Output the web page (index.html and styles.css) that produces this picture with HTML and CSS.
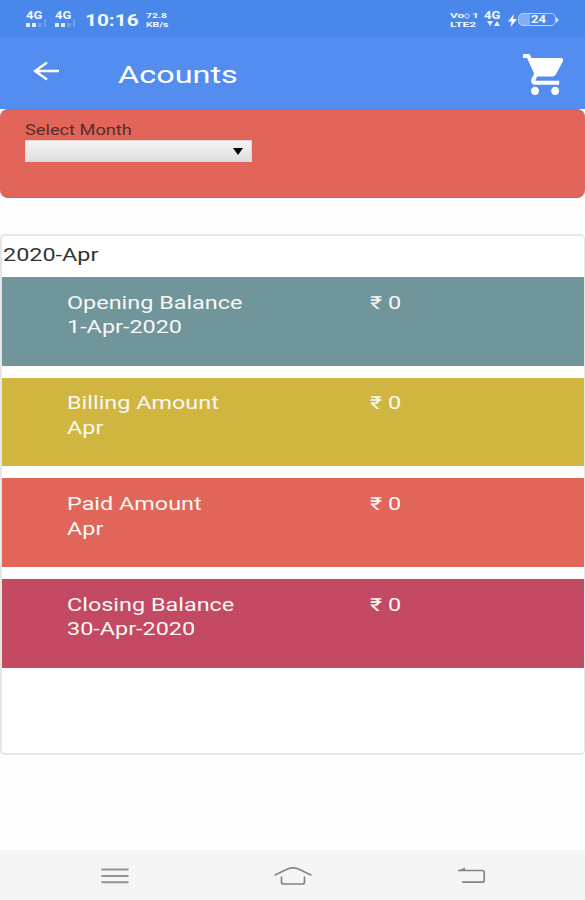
FILE: index.html
```html
<!DOCTYPE html>
<html lang="en">

<head>
    <meta charset="UTF-8">
    <meta name="viewport" content="width=device-width, initial-scale=1.0">
    <title>Acounts</title>
    <link rel="stylesheet" href="styles.css">
</head>

<body>
    <!-- status bar -->
    <div class="status-bar">
        <div class="signal">
            <span class="wide">4G</span>
            <div class="bars"><i></i><i></i><i class="off"></i><i class="off tall"></i></div>
        </div>
        <div class="signal">
            <span class="wide">4G</span>
            <div class="bars"><i></i><i></i><i class="off"></i><i class="off tall"></i></div>
        </div>
        <div class="clock"><span class="wide">10:16</span></div>
        <div class="speed"><span class="wide">72.8</span><span class="wide">KB/s</span></div>
        <div class="volte">
            <div class="vo"><span class="wide">Vo</span><svg width="6" height="6" viewBox="0 0 6 6" fill="none" stroke="#cfe1ff"><circle cx="3" cy="3" r="2.2"/></svg><span class="wide">1</span></div>
            <span class="wide">LTE2</span>
        </div>
        <div class="data">
            <span class="wide">4G</span>
            <svg width="13" height="5" viewBox="0 0 13 5"><path d="M0 0h6L3 5zM7 5h6L10 0z" fill="#e8f1ff"/></svg>
        </div>
        <svg class="bolt" width="9" height="13" viewBox="0 0 9 13"><path d="M6 0L0 7.5h3.6L2.6 13L9 5H5z" fill="#fff"/></svg>
        <div class="battery"><span class="wide">24</span></div>
        <svg class="battery-tip" width="3" height="6" viewBox="0 0 3 6"><path d="M0 0l3 3-3 3z" fill="#c5dcff"/></svg>
    </div>

    <header class="toolbar">
        <svg class="back" width="27" height="20" viewBox="0 0 27 20" fill="none" stroke="#fff" stroke-width="2.4">
            <path d="M2 10H26M14 1.5L2 10L14 18.5"/>
        </svg>
        <h1><span class="wide">Acounts</span></h1>
        <svg class="cart" width="42" height="41" viewBox="1 2 20.9 20" preserveAspectRatio="none" fill="#fff">
            <path d="M7 18c-1.1 0-1.99.9-1.99 2S5.9 22 7 22s2-.9 2-2-.9-2-2-2zM1 2v2h2l3.6 7.59-1.35 2.45c-.16.28-.25.61-.25.96 0 1.1.9 2 2 2h12v-2H7.42c-.14 0-.25-.11-.25-.25l.03-.12.9-1.63h7.45c.75 0 1.41-.41 1.75-1.03l3.58-6.49c.08-.14.12-.31.12-.48 0-.55-.45-1-1-1H5.21l-.94-2H1zm16 16c-1.1 0-1.99.9-1.99 2s.89 2 1.99 2 2-.9 2-2-.9-2-2-2z"/>
        </svg>
    </header>

    <section class="filter">
        <label class="wide">Select Month</label>
        <div class="select">
            <svg width="10" height="7" viewBox="0 0 10 7"><path d="M0 0h10L5 7z" fill="#050505"/></svg>
        </div>
    </section>

    <section class="panel">
        <div class="month"><span class="wide">2020-Apr</span></div>
        <div class="row opening">
            <div class="name"><span class="wide">Opening Balance</span><span class="wide">1-Apr-2020</span></div>
            <div class="amount"><span class="wide">₹ 0</span></div>
        </div>
        <div class="row billing">
            <div class="name"><span class="wide">Billing Amount</span><span class="wide">Apr</span></div>
            <div class="amount"><span class="wide">₹ 0</span></div>
        </div>
        <div class="row paid">
            <div class="name"><span class="wide">Paid Amount</span><span class="wide">Apr</span></div>
            <div class="amount"><span class="wide">₹ 0</span></div>
        </div>
        <div class="row closing">
            <div class="name"><span class="wide">Closing Balance</span><span class="wide">30-Apr-2020</span></div>
            <div class="amount"><span class="wide">₹ 0</span></div>
        </div>
    </section>

    <nav class="nav-bar">
        <svg width="28" height="18" viewBox="0 0 28 18" fill="none" stroke="#949494" stroke-width="2">
            <path d="M.5 2.5h27M.5 9h27M.5 15.2h27"/>
        </svg>
        <svg width="38" height="20" viewBox="0 0 38 20" fill="none" stroke="#858585" stroke-width="1.7">
            <path d="M.5 9.3L13.5 3Q19 .8 24.5 3L37.5 9.3M7.5 10.5v5.5q0 2 2 2h19q2 0 2-2v-5.5"/>
        </svg>
        <svg width="29" height="18" viewBox="0 0 29 18" fill="none" stroke="#858585" stroke-width="1.7">
            <path d="M1 3.5H25q2.200 0 2.200 2v7.700q0 2-2.200 2H5"/>
            <path d="M1 3.800L8 .5V3.800z" fill="#858585" stroke="none"/>
        </svg>
    </nav>
</body>

</html>
```

FILE: styles.css
```css
* {
    margin: 0;
    padding: 0;
    box-sizing: border-box;
}

body {
    font-family: Roboto, 'Liberation Sans', sans-serif;
    width: 585px;
    height: 900px;
    display: flex;
    flex-direction: column;
    background-color: #fefefe;
    overflow: hidden;
}

svg {
    display: block;
    flex-shrink: 0;
}

/* wide letterforms, stretched from the left edge */
.wide {
    display: block;
    width: max-content;
    white-space: nowrap;
    transform: scaleX(1.3);
    transform-origin: left;
}

.status-bar {
    height: 38px;
    flex-shrink: 0;
    display: flex;
    align-items: flex-start;
    padding: 11px 0 0 26px;
    background-color: #4a87ea;
    color: #f3f8ff;
    font-weight: 700;
}

.signal {
    width: 29px;
    font-size: 10px;
    line-height: 10px;
}

.bars {
    display: flex;
    align-items: flex-end;
    gap: 2px;
    height: 6px;
}

.bars i {
    width: 4px;
    height: 4px;
    background-color: #e0edff;
}

.bars .off {
    background-color: #6b9df1;
}

.bars .tall {
    width: 2px;
    height: 8px;
}

.clock {
    width: 62px;
    padding-left: 1px;
    font-size: 16px;
    line-height: 19px;
}

.speed {
    width: 304px;
    font-size: 8px;
    line-height: 9px;
}

.speed .wide {
    transform: scaleX(1.3);
}

.volte {
    width: 34px;
    font-size: 8px;
    line-height: 9px;
}

.vo {
    display: flex;
    align-items: center;
    width: 27px;
}

.vo svg {
    margin: 0 2px 0 4px;
}

.volte .wide {
    transform: scaleX(1.5);
}

.data {
    width: 24px;
    font-size: 10px;
    line-height: 10px;
}

.data svg {
    margin-left: 3px;
}

.bolt {
    margin: 3px 1px 0 0;
}

.battery {
    width: 38px;
    height: 13px;
    margin-top: 2px;
    padding-left: 12px;
    border: 1px solid #b8d3ff;
    border-radius: 5px;
    background: linear-gradient(to right, #83adf5 11px, transparent 11px);
    font-size: 10px;
    line-height: 11px;
}

.battery-tip {
    margin-top: 6px;
}

.toolbar {
    height: 71px;
    flex-shrink: 0;
    display: flex;
    align-items: flex-start;
    padding-left: 33px;
    background-color: #538df0;
    color: #fff;
}

.back {
    margin-top: 23px;
}

.toolbar h1 {
    width: 405px;
    margin: 23px 0 0 58px;
    font-size: 23.5px;
    font-weight: 400;
    line-height: 28px;
}

.toolbar .wide {
    transform: scaleX(1.38);
}

.cart {
    margin-top: 16px;
}

.filter {
    height: 89px;
    flex-shrink: 0;
    padding: 12px 25px 0;
    border-top: 1px solid #a66b83;
    border-bottom: 1px solid #d05f50;
    border-radius: 8px;
    background-color: #e16659;
    color: #572c2a;
    font-size: 14px;
    line-height: 17px;
}

.select {
    width: 227px;
    height: 22px;
    margin-top: 1px;
    padding-right: 8px;
    display: flex;
    align-items: center;
    justify-content: flex-end;
    border: 1px solid #e6d5d2;
    background: linear-gradient(#f5f5f5, #dedede);
}

.panel {
    height: 521px;
    flex-shrink: 0;
    margin-top: 36px;
    border: 2px solid #e6e6e6;
    border-right-width: 1px;
    border-radius: 5px;
    background-color: #fff;
}

.month {
    height: 41px;
    padding: 8px 0 0 1px;
    color: #333;
    font-size: 18px;
    line-height: 22px;
}

.row {
    height: 88.7px;
    margin-bottom: 12px;
    display: flex;
    padding: 13.8px 0 0 64.5px;
    color: #f8f8f5;
    font-size: 18px;
    line-height: 24.5px;
}

.name {
    width: 303px;
}

.opening {
    background-color: #70959b;
}

.billing {
    background-color: #d0b641;
}

.paid {
    background-color: #e16659;
}

.closing {
    background-color: #c44963;
}

.nav-bar {
    height: 50px;
    flex-shrink: 0;
    margin-top: auto;
    display: flex;
    align-items: center;
    gap: 145px;
    padding: 2px 0 0 101px;
    background-color: #f5f5f5;
}
```
